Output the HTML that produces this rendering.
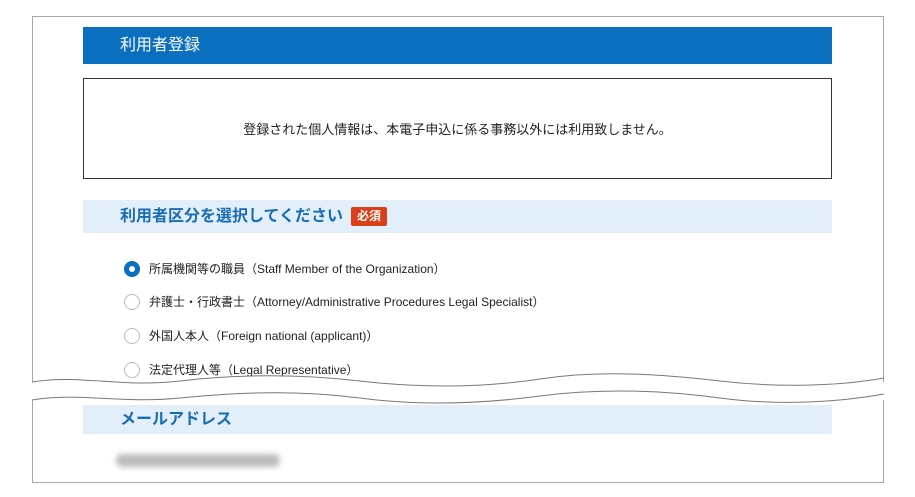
<!DOCTYPE html>
<html><head><meta charset="utf-8"><style>
body{margin:0;width:915px;height:497px;background:#fff;position:relative;overflow:hidden;font-family:"Liberation Sans","Noto Sans CJK JP",sans-serif;}
.frame{position:absolute;left:32px;top:16px;width:850px;height:465px;border:1px solid #a8a8a8;}
.abs{position:absolute;}
.bar{left:83px;top:27px;width:749px;height:37px;background:#0a6fbf;color:#fff;font-size:16px;line-height:37px;}
.note{left:83px;top:78px;width:747px;height:99px;border:1px solid #333;font-size:13px;color:#222;text-align:center;line-height:101px;}
.sec{left:83px;width:749px;background:#e2effa;color:#1b6db3;font-weight:bold;font-size:16px;}
.req{display:inline-block;background:#d9401a;color:#fff;font-size:12px;padding:0 6px;line-height:19px;border-radius:2px;margin-left:8px;vertical-align:1px}
.opt{left:124px;font-size:12px;color:#222;height:20px;line-height:20px;}
.r{display:inline-block;width:16px;height:16px;border:1px solid #bbb;border-radius:50%;box-sizing:border-box;vertical-align:middle;margin-right:9px;margin-top:-2px}
.r.on{border:5px solid #0a6fbf}
</style></head><body>
<div class="frame"></div>
<div class="abs bar"><span style="margin-left:37px">利用者登録</span></div>
<div class="abs note">登録された個人情報は、本電子申込に係る事務以外には利用致しません。</div>
<div class="abs sec" style="top:200px;height:33px;line-height:33px"><span style="margin-left:37px">利用者区分を選択してください</span><span class="req">必須</span></div>
<div class="abs opt" style="top:259px"><span class="r on"></span>所属機関等の職員（Staff Member of the Organization）</div>
<div class="abs opt" style="top:292px"><span class="r"></span>弁護士・行政書士（Attorney/Administrative Procedures Legal Specialist）</div>
<div class="abs opt" style="top:326px"><span class="r"></span>外国人本人（Foreign national (applicant)）</div>
<div class="abs opt" style="top:360px"><span class="r"></span>法定代理人等（Legal Representative）</div>
<svg class="abs" style="left:0;top:360px" width="915" height="50">
<path d="M0,22 L915,22 L915,40 L0,40Z" fill="#fff"/>
<path d="M32,22 C80,14 120,28 180,21 S300,14 360,21 S480,28 540,19 S660,14 720,21 S840,26 884,18" fill="none" stroke="#777" stroke-width="1"/>
<path d="M32,40 C80,32 120,44 180,38 S300,30 360,38 S480,44 540,36 S660,30 720,38 S840,42 884,34" fill="none" stroke="#777" stroke-width="1"/>
</svg>
<div class="abs sec" style="top:405px;height:29px;line-height:29px"><span style="margin-left:37px">メールアドレス</span></div>
<div class="abs" style="left:116px;top:454px;width:164px;height:13px;background:#bbb;border-radius:6px;filter:blur(3px)"></div>
</body></html>
